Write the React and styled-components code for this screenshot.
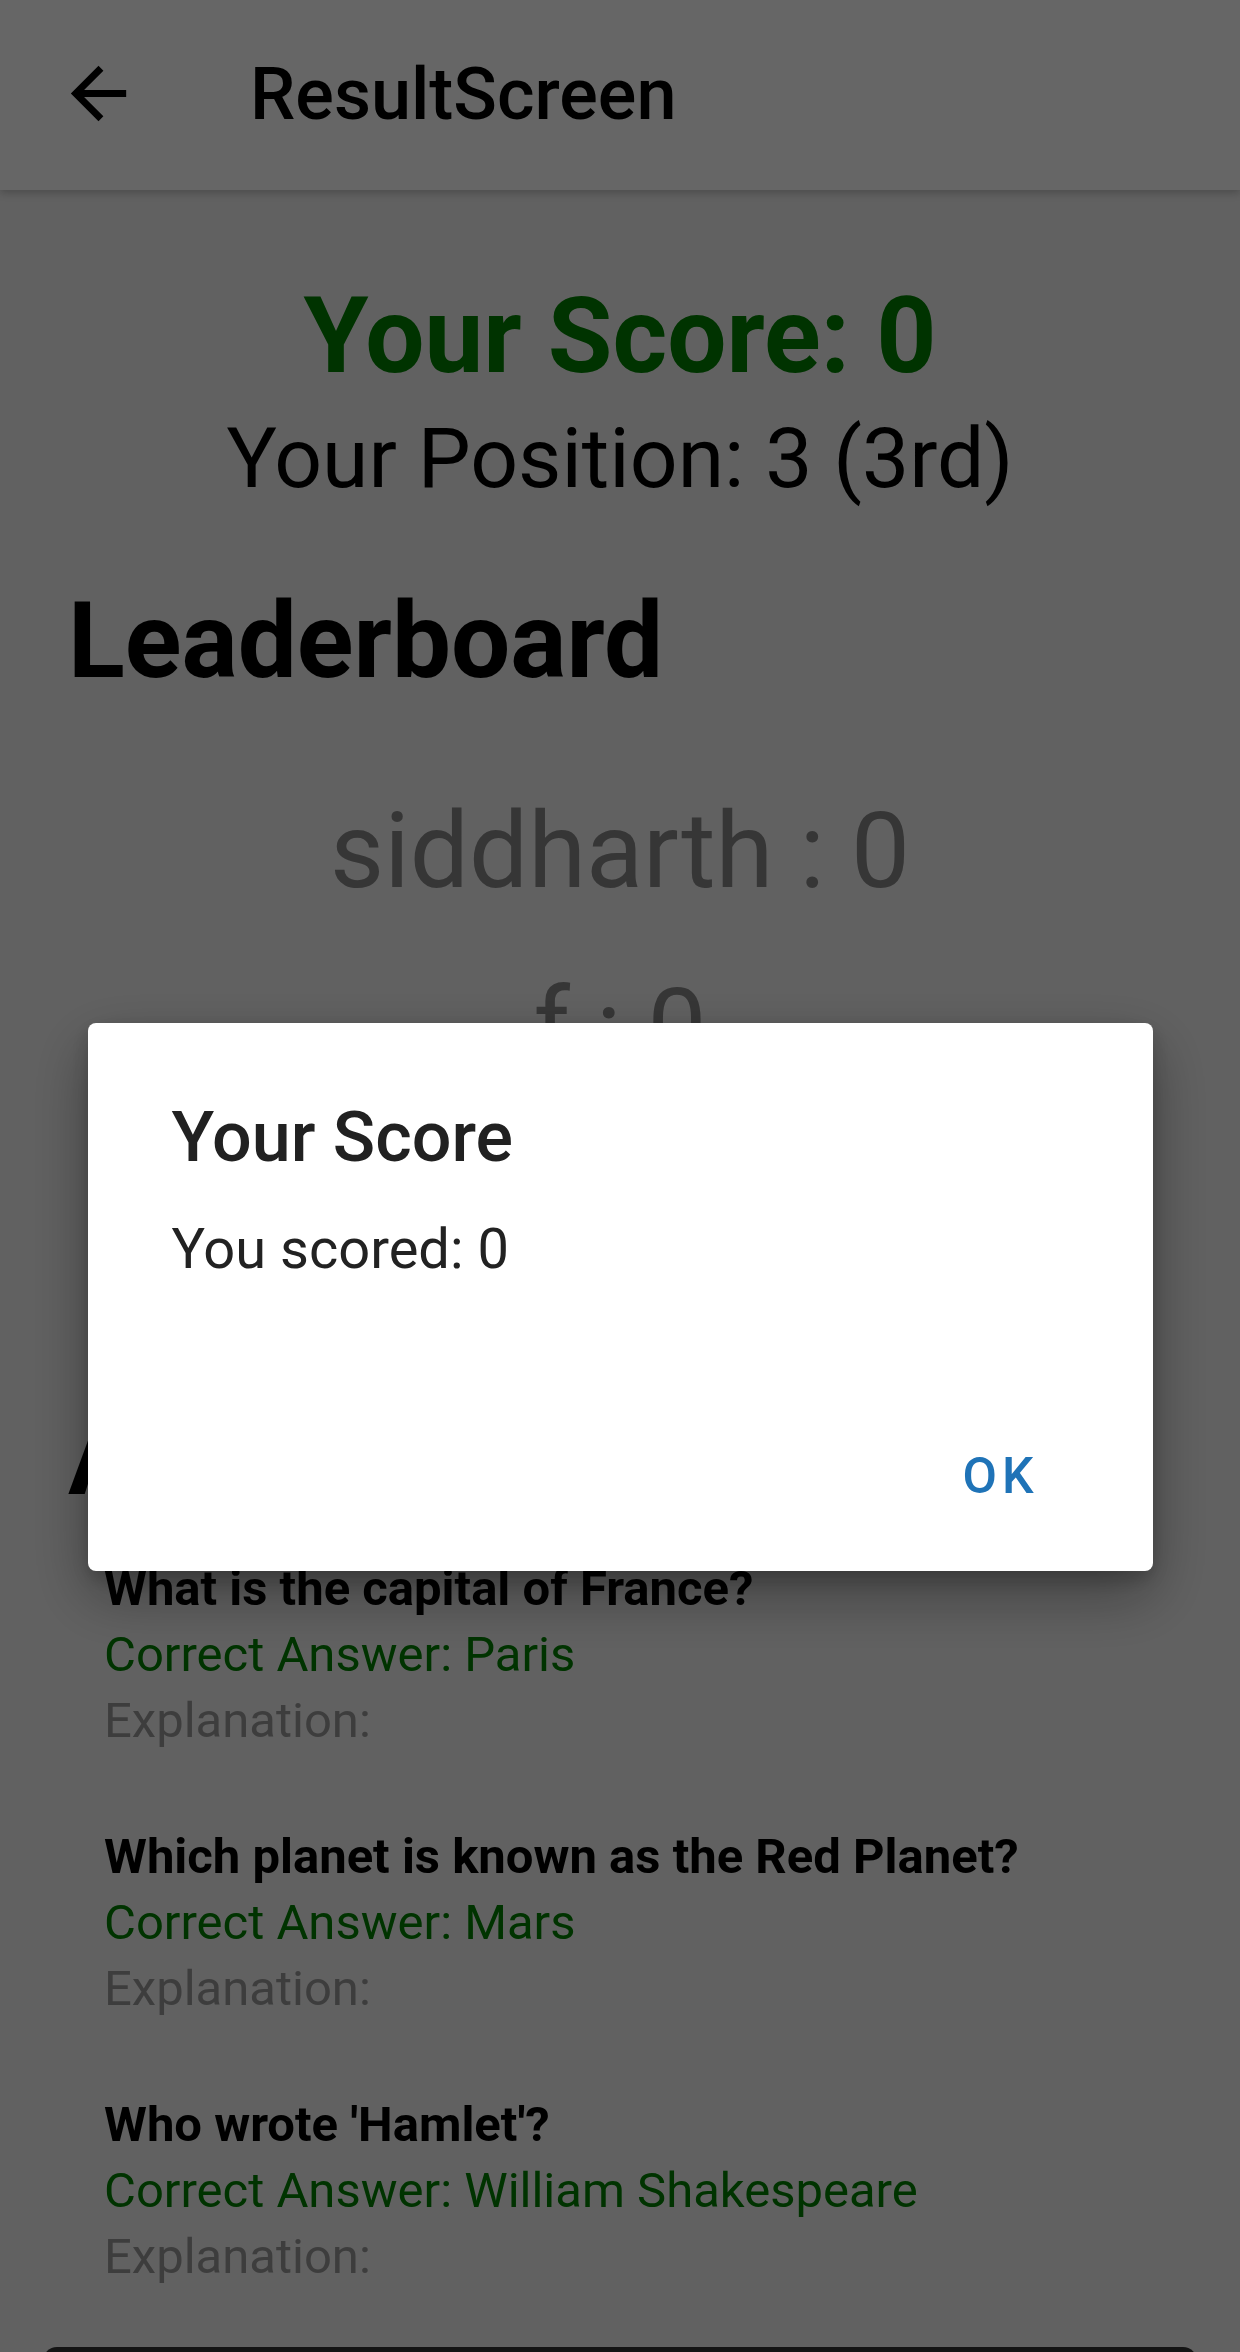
import React from "react";
import styled, { createGlobalStyle } from "styled-components";

const GlobalStyle = createGlobalStyle`
  html, body {
    margin: 0;
    padding: 0;
    overflow: hidden;
    background: #f2f2f2;
    font-family: Roboto, "Noto Sans", "Liberation Sans", sans-serif;
  }
`;

const leaders = [
  { name: "siddharth", score: 0 },
  { name: "f", score: 0 },
  { name: "guest", score: 0 },
];

const answers = [
  { question: "What is the capital of France?", answer: "Paris" },
  { question: "Which planet is known as the Red Planet?", answer: "Mars" },
  { question: "Who wrote 'Hamlet'?", answer: "William Shakespeare" },
];

const ResultScreen = () => {
  return (
    <>
      <GlobalStyle />
      <Screen>
        <AppBar>
          <BackButton aria-label="back">
            <svg viewBox="0 0 24 24" width="83" height="83">
              <path
                fill="#000"
                d="M20 11H7.83l5.59-5.59L12 4l-8 8 8 8 1.41-1.41L7.83 13H20v-2z"
              />
            </svg>
          </BackButton>
          <Title>ResultScreen</Title>
        </AppBar>

        <Content>
          <ScoreText>Your Score: 0</ScoreText>
          <PositionText>Your Position: 3 (3rd)</PositionText>

          <SectionTitle>Leaderboard</SectionTitle>
          <LeaderList>
            {leaders.map((l) => (
              <LeaderRow key={l.name}>
                {l.name} : {l.score}
              </LeaderRow>
            ))}
          </LeaderList>

          <SectionTitle>Answers</SectionTitle>
          <AnswerList>
            {answers.map((a) => (
              <AnswerItem key={a.question}>
                <Question>{a.question}</Question>
                <Correct>Correct Answer: {a.answer}</Correct>
                <Explanation>Explanation:</Explanation>
              </AnswerItem>
            ))}
          </AnswerList>

          <HomeButton>Back to Home</HomeButton>
        </Content>
      </Screen>

      <Scrim>
        <Dialog>
          <DialogTitle>Your Score</DialogTitle>
          <DialogMessage>You scored: 0</DialogMessage>
          <DialogActions>
            <TextButton>OK</TextButton>
          </DialogActions>
        </Dialog>
      </Scrim>
    </>
  );
};

const Screen = styled.div`
  width: 1240px;
  min-height: 2352px;
  background: #f2f2f2;
`;

const AppBar = styled.header`
  height: 190px;
  background: #ffffff;
  display: flex;
  align-items: center;
  box-shadow: 0 3px 8px rgba(0, 0, 0, 0.22);
  position: relative;
  z-index: 1;
`;

const BackButton = styled.div`
  width: 83px;
  height: 83px;
  margin-left: 57px;
  margin-top: -3px;
  svg {
    display: block;
  }
`;

const Title = styled.h1`
  margin: 0 0 0 110px;
  font-size: 72px;
  font-weight: 500;
  color: #000;
  line-height: 84px;
`;

const Content = styled.main`
  padding: 0 43px;
  display: flex;
  flex-direction: column;
`;

const ScoreText = styled.div`
  margin-top: 85px;
  text-align: center;
  font-size: 105px;
  font-weight: 700;
  line-height: 123px;
  color: #008000;
`;

const PositionText = styled.div`
  margin-top: 12px;
  text-align: center;
  font-size: 84px;
  line-height: 98px;
  color: #000;
`;

const SectionTitle = styled.h2`
  margin: 72px 0 0 25px;
  font-size: 105px;
  font-weight: 700;
  line-height: 123px;
  color: #000;
`;

const LeaderList = styled.div`
  margin-top: 87px;
  margin-bottom: 60px;
  display: flex;
  flex-direction: column;
  gap: 53px;
`;

const LeaderRow = styled.div`
  text-align: center;
  font-size: 105px;
  line-height: 123px;
  color: #888888;
`;

const AnswerList = styled.div`
  margin-top: 42px;
  padding-left: 61px;
  display: flex;
  flex-direction: column;
  gap: 82px;
`;

const AnswerItem = styled.div`
  display: flex;
  flex-direction: column;
  gap: 12px;
  font-size: 49px;
  line-height: 54px;
`;

const Question = styled.div`
  font-weight: 700;
  color: #000;
`;

const Correct = styled.div`
  color: #008000;
`;

const Explanation = styled.div`
  color: #9a9a9a;
`;

const HomeButton = styled.button`
  margin-top: 63px;
  height: 160px;
  border: none;
  border-radius: 14px;
  background: #333333;
  color: #fff;
  font-family: inherit;
  font-size: 50px;
  padding-top: 60px;
`;

const Scrim = styled.div`
  position: fixed;
  inset: 0;
  background: rgba(0, 0, 0, 0.6);
  display: flex;
  justify-content: center;
  align-items: flex-start;
  padding-top: 1023px;
  z-index: 10;
`;

const Dialog = styled.div`
  width: 1065px;
  height: 548px;
  box-sizing: border-box;
  background: #ffffff;
  border-radius: 8px;
  box-shadow: 0 24px 60px rgba(0, 0, 0, 0.35), 0 8px 20px rgba(0, 0, 0, 0.2);
  padding: 0 84px;
  display: flex;
  flex-direction: column;
`;

const DialogTitle = styled.div`
  margin-top: 73px;
  font-size: 70px;
  font-weight: 500;
  line-height: 82px;
  color: #212121;
`;

const DialogMessage = styled.div`
  margin-top: 38px;
  font-size: 56px;
  line-height: 66px;
  color: #222222;
`;

const DialogActions = styled.div`
  margin-top: auto;
  margin-right: 2px;
  padding-bottom: 52px;
  display: flex;
  justify-content: flex-end;
`;

const TextButton = styled.button`
  border: none;
  background: transparent;
  padding: 14px 28px;
  font-family: inherit;
  font-size: 50px;
  font-weight: 500;
  line-height: 57px;
  letter-spacing: 5px;
  color: #1f73b7;
`;

export default ResultScreen;
